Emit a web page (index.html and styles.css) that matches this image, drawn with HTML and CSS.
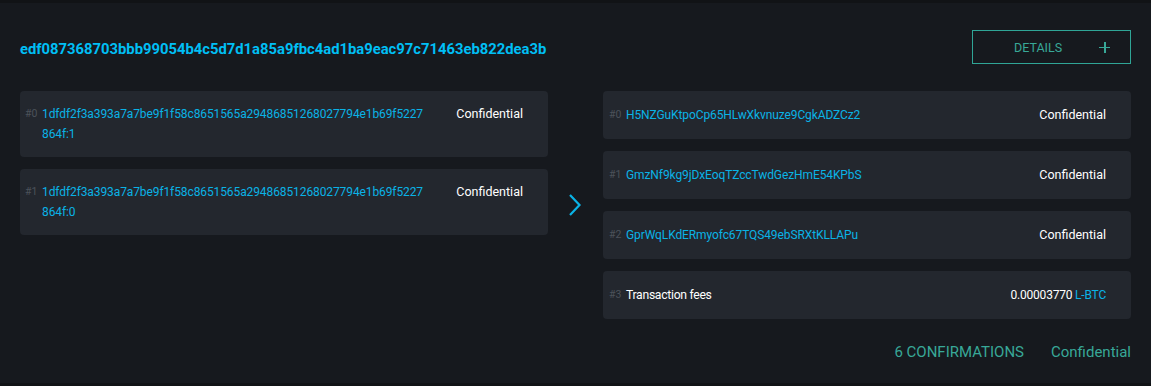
FILE: index.html
```html
<!DOCTYPE html>
<html lang="en">
<head>
  <meta charset="UTF-8">
  <title>Transaction</title>
  <link rel="stylesheet" href="styles.css">
</head>
<body>
  <div class="tx">
    <div class="tx-head">
      <a class="txid" href="#">edf087368703bbb99054b4c5d7d1a85a9fbc4ad1ba9eac97c71463eb822dea3b</a>
      <button class="details">DETAILS <span class="plus"></span></button>
    </div>

    <div class="io">
      <div class="ins">
        <div class="row tall">
          <span class="idx">#0</span>
          <a class="ref wrap" href="#">1dfdf2f3a393a7a7be9f1f58c8651565a29486851268027794e1b69f5227864f:1</a>
          <span class="amt">Confidential</span>
        </div>
        <div class="row tall">
          <span class="idx">#1</span>
          <a class="ref wrap" href="#">1dfdf2f3a393a7a7be9f1f58c8651565a29486851268027794e1b69f5227864f:0</a>
          <span class="amt">Confidential</span>
        </div>
      </div>

      <div class="arrow">
        <svg width="14" height="24" viewBox="0 0 14 24"><path d="M2 2 L11.5 12 L2 22" fill="none" stroke="#0ab3e6" stroke-width="2.2"/></svg>
      </div>

      <div class="outs">
        <div class="row">
          <span class="idx">#0</span>
          <a class="ref" href="#">H5NZGuKtpoCp65HLwXkvnuze9CgkADZCz2</a>
          <span class="amt">Confidential</span>
        </div>
        <div class="row">
          <span class="idx">#1</span>
          <a class="ref" href="#">GmzNf9kg9jDxEoqTZccTwdGezHmE54KPbS</a>
          <span class="amt">Confidential</span>
        </div>
        <div class="row">
          <span class="idx">#2</span>
          <a class="ref" href="#">GprWqLKdERmyofc67TQS49ebSRXtKLLAPu</a>
          <span class="amt">Confidential</span>
        </div>
        <div class="row">
          <span class="idx">#3</span>
          <span class="ref plain">Transaction fees</span>
          <span class="amt fee">0.00003770 <span class="unit">L-BTC</span></span>
        </div>
      </div>
    </div>

    <div class="tx-foot">
      <span>6 CONFIRMATIONS</span>
      <span>Confidential</span>
    </div>
  </div>
</body>
</html>
```

FILE: styles.css
```css
body {
  margin: 0;
  background: #16191e;
  font-family: Roboto, sans-serif;
  color: #fff;
  border-top: 3px solid #111316;
}
a {
  text-decoration: none;
}
.tx {
  padding: 27px 20px 0;
  height: 353px;
  border-bottom: 3px solid #111316;
  box-sizing: content-box;
}
.tx-head {
  display: flex;
  justify-content: space-between;
  align-items: center;
  height: 34px;
}
.txid {
  color: #00bff5;
  font-weight: bold;
  font-size: 14.8px;
  padding-top: 3px;
}
.details {
  width: 159px;
  height: 34px;
  display: flex;
  align-items: center;
  justify-content: space-between;
  padding: 0 20px 0 41px;
  background: none;
  border: 1px solid #2fa596;
  color: #38a898;
  font-family: Roboto, sans-serif;
  font-size: 12.5px;
  cursor: pointer;
}
.plus {
  position: relative;
  width: 11px;
  height: 11px;
}
.plus::before, .plus::after {
  content: "";
  position: absolute;
  background: #38a898;
}
.plus::before {
  left: 0;
  top: 5px;
  width: 11px;
  height: 1.5px;
}
.plus::after {
  left: 5px;
  top: 0;
  width: 1.5px;
  height: 11px;
}
.io {
  display: grid;
  grid-template-columns: 528px 55px 528px;
  margin-top: 27px;
}
.ins, .outs {
  display: flex;
  flex-direction: column;
  gap: 12px;
}
.arrow {
  display: flex;
  align-items: center;
  justify-content: center;
  padding-right: 2px;
}
.row {
  display: flex;
  align-items: flex-start;
  background: #23272e;
  border-radius: 4px;
  padding: 14px 25px 14px 6px;
  font-size: 12.5px;
  line-height: 20px;
}
.row.tall {
  padding: 13px 25px 13px 5px;
}
.idx {
  width: 17px;
  flex: none;
  color: #4c525a;
  font-size: 10.5px;
}
.ref {
  flex: 1;
  color: #0ab3e6;
  font-size: 12px;
  letter-spacing: -0.1px;
}
.ref.wrap {
  flex: none;
  width: 384px;
  word-break: break-all;
}
.ref.plain {
  color: #fff;
  font-size: 12.2px;
  letter-spacing: -0.3px;
}
.amt {
  margin-left: auto;
  text-align: right;
  white-space: nowrap;
}
.amt.fee {
  font-size: 12px;
  letter-spacing: -0.2px;
}
.unit {
  color: #0ab3e6;
}
.tx-foot {
  display: flex;
  justify-content: flex-end;
  gap: 27px;
  margin-top: 21px;
  color: #38a898;
  font-size: 15px;
  line-height: 24px;
}
```
